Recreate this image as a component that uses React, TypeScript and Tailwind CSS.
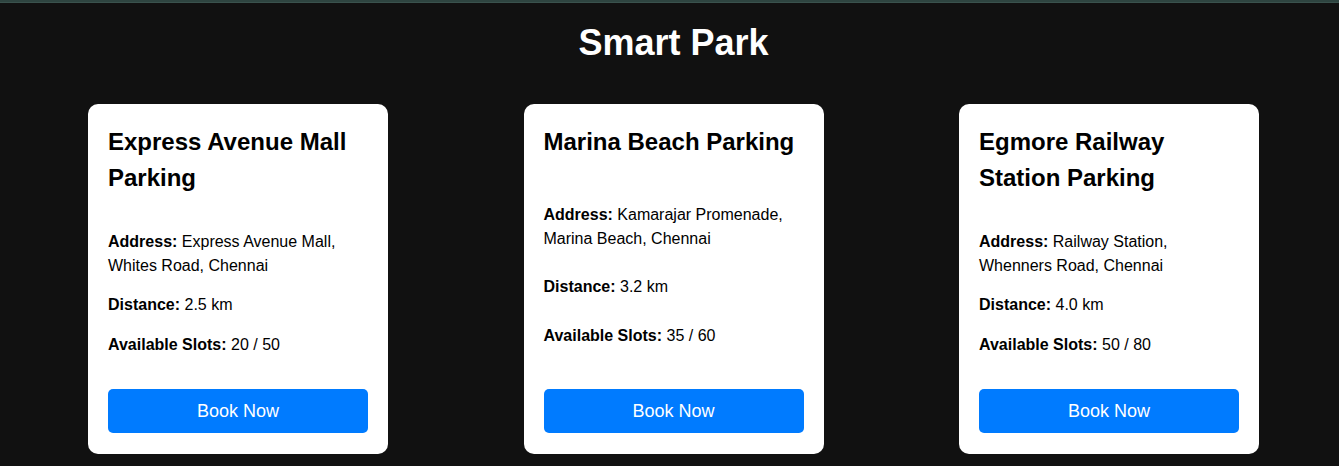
import React from "react";

const lots = [
  {
    name: "Express Avenue Mall Parking",
    address: "Express Avenue Mall, Whites Road, Chennai",
    distance: "2.5 km",
    slots: "20 / 50",
  },
  {
    name: "Marina Beach Parking",
    address: "Kamarajar Promenade, Marina Beach, Chennai",
    distance: "3.2 km",
    slots: "35 / 60",
  },
  {
    name: "Egmore Railway Station Parking",
    address: "Railway Station, Whenners Road, Chennai",
    distance: "4.0 km",
    slots: "50 / 80",
  },
];

export default function App() {
  return (
    <div
      className="min-h-[466px] w-full bg-[#111111] text-black"
      style={{ fontFamily: '"Liberation Sans", Arial, sans-serif' }}
    >
      <div className="h-[3px] w-full bg-[#2e4440] border-b border-[#3a524d]" />
      <h1 className="pl-[8px] pt-[19px] text-center text-[36px] font-bold leading-[41px] text-white">
        Smart Park
      </h1>
      <div className="mt-[41px] flex items-stretch gap-[135.5px] pl-[88px]">
        {lots.map((lot) => (
          <div
            key={lot.name}
            className="flex w-[300px] flex-col justify-between rounded-[10px] bg-white px-5 pt-5 pb-[21px]"
          >
            <h3 className="mb-[34px] text-[24px] font-bold leading-[36px]">{lot.name}</h3>
            <p className="mb-[15px] text-[16px] leading-[24px]">
              <span className="font-bold">Address:</span> {lot.address}
            </p>
            <p className="mb-[16px] text-[16px] leading-[24px]">
              <span className="font-bold">Distance:</span> {lot.distance}
            </p>
            <p className="mb-[32px] text-[16px] leading-[24px]">
              <span className="font-bold">Available Slots:</span> {lot.slots}
            </p>
            <button className="h-[44px] w-full rounded-[5px] bg-[#007bff] text-[18px] text-white">
              Book Now
            </button>
          </div>
        ))}
      </div>
    </div>
  );
}
